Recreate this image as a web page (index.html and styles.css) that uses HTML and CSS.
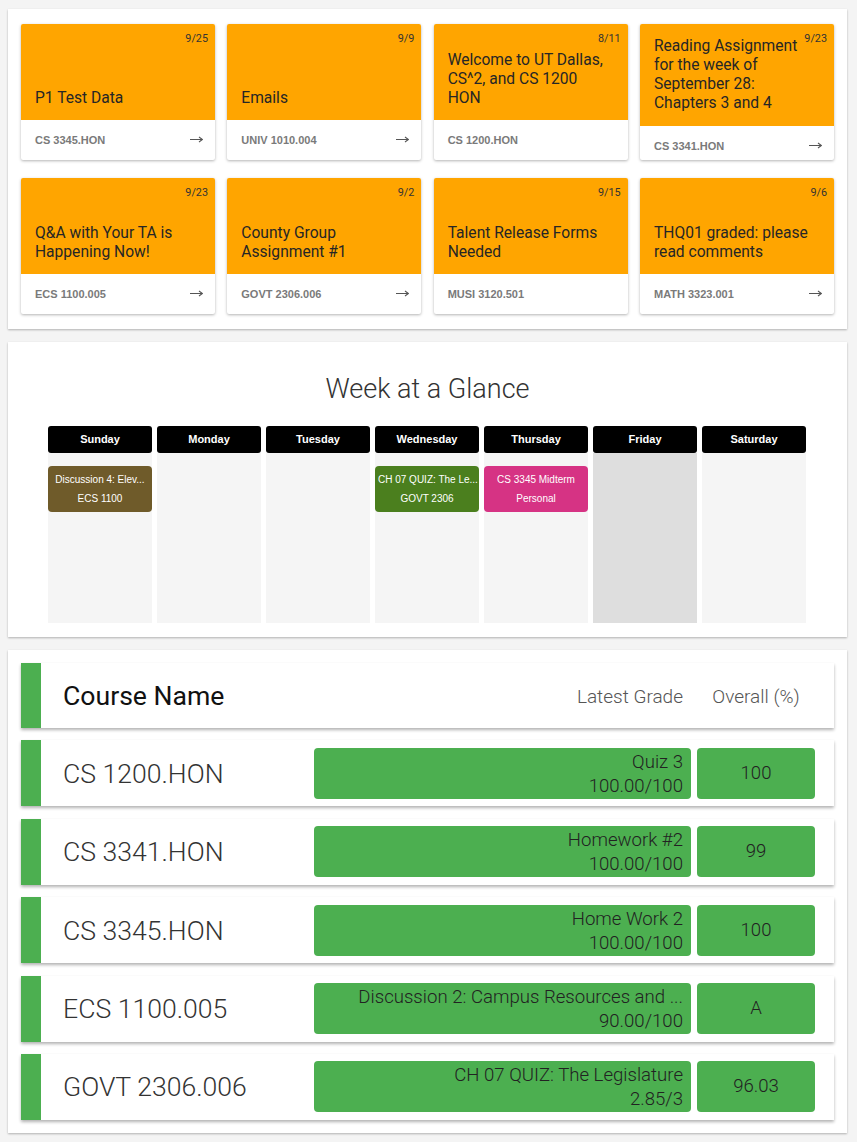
FILE: index.html
```html
<!DOCTYPE html>
<html lang="en">
<head>
<meta charset="utf-8">
<title>Dashboard</title>
<link rel="stylesheet" href="styles.css">
</head>
<body>
<section class="panel announcements">
  <div class="card"><div class="card-top"><span class="date">9/25</span><div class="title">P1 Test Data</div></div><div class="card-foot"><span>CS 3345.HON</span><svg class="arrow" width="13" height="7" viewBox="0 0 13 7"><path d="M0 3.5H12M9 1L12.5 3.5L9 6" fill="none" stroke="#555" stroke-width="1.1"/></svg></div></div>
  <div class="card"><div class="card-top"><span class="date">9/9</span><div class="title">Emails</div></div><div class="card-foot"><span>UNIV 1010.004</span><svg class="arrow" width="13" height="7" viewBox="0 0 13 7"><path d="M0 3.5H12M9 1L12.5 3.5L9 6" fill="none" stroke="#555" stroke-width="1.1"/></svg></div></div>
  <div class="card"><div class="card-top"><span class="date">8/11</span><div class="title">Welcome to UT Dallas, CS^2, and CS 1200 HON</div></div><div class="card-foot"><span>CS 1200.HON</span></div></div>
  <div class="card"><div class="card-top"><span class="date">9/23</span><div class="title">Reading Assignment for the week of September 28: Chapters 3 and 4</div></div><div class="card-foot"><span>CS 3341.HON</span><svg class="arrow" width="13" height="7" viewBox="0 0 13 7"><path d="M0 3.5H12M9 1L12.5 3.5L9 6" fill="none" stroke="#555" stroke-width="1.1"/></svg></div></div>
  <div class="card"><div class="card-top"><span class="date">9/23</span><div class="title">Q&amp;A with Your TA is Happening Now!</div></div><div class="card-foot"><span>ECS 1100.005</span><svg class="arrow" width="13" height="7" viewBox="0 0 13 7"><path d="M0 3.5H12M9 1L12.5 3.5L9 6" fill="none" stroke="#555" stroke-width="1.1"/></svg></div></div>
  <div class="card"><div class="card-top"><span class="date">9/2</span><div class="title">County Group Assignment #1</div></div><div class="card-foot"><span>GOVT 2306.006</span><svg class="arrow" width="13" height="7" viewBox="0 0 13 7"><path d="M0 3.5H12M9 1L12.5 3.5L9 6" fill="none" stroke="#555" stroke-width="1.1"/></svg></div></div>
  <div class="card"><div class="card-top"><span class="date">9/15</span><div class="title">Talent Release Forms Needed</div></div><div class="card-foot"><span>MUSI 3120.501</span></div></div>
  <div class="card"><div class="card-top"><span class="date">9/6</span><div class="title">THQ01 graded: please read comments</div></div><div class="card-foot"><span>MATH 3323.001</span><svg class="arrow" width="13" height="7" viewBox="0 0 13 7"><path d="M0 3.5H12M9 1L12.5 3.5L9 6" fill="none" stroke="#555" stroke-width="1.1"/></svg></div></div>
</section>

<section class="panel week">
  <h2 class="week-title">Week at a Glance</h2>
  <div class="days">
    <div class="day"><div class="day-head">Sunday</div><div class="day-body">
      <div class="event ev-brown"><div>Discussion 4: Elev...</div><div>ECS 1100</div></div>
    </div></div>
    <div class="day"><div class="day-head">Monday</div><div class="day-body"></div></div>
    <div class="day"><div class="day-head">Tuesday</div><div class="day-body"></div></div>
    <div class="day"><div class="day-head">Wednesday</div><div class="day-body">
      <div class="event ev-green"><div>CH 07 QUIZ: The Le...</div><div>GOVT 2306</div></div>
    </div></div>
    <div class="day"><div class="day-head">Thursday</div><div class="day-body">
      <div class="event ev-pink"><div>CS 3345 Midterm</div><div>Personal</div></div>
    </div></div>
    <div class="day today"><div class="day-head">Friday</div><div class="day-body"></div></div>
    <div class="day"><div class="day-head">Saturday</div><div class="day-body"></div></div>
  </div>
</section>

<section class="panel grades">
  <div class="grow head">
    <div class="bar"></div>
    <div class="cname">Course Name</div>
    <div class="hlatest">Latest Grade</div>
    <div class="hoverall">Overall (%)</div>
  </div>
  <div class="grow">
    <div class="bar"></div>
    <div class="cname">CS 1200.HON</div>
    <div class="latest"><div>Quiz 3</div><div>100.00/100</div></div>
    <div class="overall">100</div>
  </div>
  <div class="grow">
    <div class="bar"></div>
    <div class="cname">CS 3341.HON</div>
    <div class="latest"><div>Homework #2</div><div>100.00/100</div></div>
    <div class="overall">99</div>
  </div>
  <div class="grow">
    <div class="bar"></div>
    <div class="cname">CS 3345.HON</div>
    <div class="latest"><div>Home Work 2</div><div>100.00/100</div></div>
    <div class="overall">100</div>
  </div>
  <div class="grow">
    <div class="bar"></div>
    <div class="cname">ECS 1100.005</div>
    <div class="latest"><div>Discussion 2: Campus Resources and ...</div><div>90.00/100</div></div>
    <div class="overall">A</div>
  </div>
  <div class="grow">
    <div class="bar"></div>
    <div class="cname">GOVT 2306.006</div>
    <div class="latest"><div>CH 07 QUIZ: The Legislature</div><div>2.85/3</div></div>
    <div class="overall">96.03</div>
  </div>
</section>
</body>
</html>
```

FILE: styles.css
```css
* { box-sizing: border-box; }
html, body { margin: 0; }
body {
  background: #f4f4f4;
  padding: 9px 10px 9px 8px;
  font-family: Roboto, "Liberation Sans", Arial, sans-serif;
  color: #222;
}
.panel {
  background: #fff;
  box-shadow: 0 1px 2px rgba(0,0,0,0.28);
  margin-bottom: 13px;
}
.panel:last-child { margin-bottom: 0; }

/* Announcements */
.announcements {
  display: grid;
  grid-template-columns: repeat(4, 1fr);
  column-gap: 12.3px;
  row-gap: 18px;
  padding: 15px 13px;
}
.card {
  height: 136px;
  display: flex;
  flex-direction: column;
  background: #fff;
  box-shadow: 0 1px 3px rgba(0,0,0,0.3);
  border-radius: 2px;
  overflow: hidden;
}
.card-top {
  position: relative;
  flex: 0 0 auto;
  min-height: 96px;
  background: #ffa500;
  padding: 13px 14px 12.5px;
  display: flex;
  flex-direction: column;
  justify-content: flex-end;
}
.date {
  position: absolute;
  top: 8px;
  right: 7px;
  font-size: 10.8px;
  line-height: 13px;
  color: #333;
}
.title {
  font-weight: 400;
  font-size: 15.6px;
  line-height: 19px;
  color: #262626;
}
.card-foot {
  flex: 1 1 auto;
  display: flex;
  justify-content: space-between;
  align-items: flex-start;
  padding: 13px 12px 0 14px;
  font-family: "Liberation Sans", Arial, sans-serif;
  font-weight: bold;
  font-size: 11px;
  line-height: 14px;
  color: #7a7a7a;
}
.arrow { margin-top: 3px; }

/* Week */
.week { padding: 30px 0 14px; }
.week-title {
  margin: 0 0 20px;
  text-align: center;
  font-family: "Roboto Light", Roboto, sans-serif;
  font-weight: 300;
  font-size: 27px;
  line-height: 34px;
  color: #333;
}
.days {
  display: grid;
  grid-template-columns: repeat(7, 104px);
  column-gap: 5px;
  justify-content: center;
  font-family: "Liberation Sans", Arial, sans-serif;
  margin-left: -1px;
}
.day-head {
  height: 27px;
  background: #000;
  color: #fff;
  font-weight: bold;
  font-size: 11px;
  line-height: 27px;
  text-align: center;
  border-radius: 3px;
}
.day-body {
  height: 170px;
  background: #f5f5f5;
  padding-top: 13px;
}
.today .day-body { background: #dedede; }
.event {
  height: 46px;
  padding: 4px 3px;
  border-radius: 4px;
  color: #fff;
  font-size: 10px;
  line-height: 19px;
  text-align: center;
  white-space: nowrap;
  overflow: hidden;
}
.ev-brown { background: #6f5b2a; }
.ev-green { background: #4b7f1e; }
.ev-pink { background: #d63384; }

/* Grades */
.grades {
  padding: 13px 13px;
  display: flex;
  flex-direction: column;
  gap: 12.4px;
}
.grow {
  display: flex;
  align-items: center;
  height: 66px;
  background: #fff;
  box-shadow: 0 2px 3px rgba(0,0,0,0.3);
  padding-right: 19px;
}
.grow.head { height: 65px; }
.bar {
  align-self: stretch;
  width: 20px;
  background: #4caf50;
  flex: 0 0 20px;
}
.cname {
  flex: 0 0 273px;
  padding-left: 22px;
  font-family: "Roboto Light", Roboto, sans-serif;
  font-size: 26.6px;
  font-weight: 300;
  color: #333;
  white-space: nowrap;
}
.head .cname { font-family: Roboto, sans-serif; font-weight: 400; color: #111; }
.hlatest, .latest {
  flex: 0 0 377px;
  text-align: right;
  padding: 0 8px;
}
.hlatest, .hoverall {
  font-family: "Roboto Light", Roboto, sans-serif;
  font-size: 19px;
  font-weight: 300;
  color: #555;
  padding-top: 2px;
}
.hoverall, .overall {
  flex: 0 0 118px;
  margin-left: 6px;
  text-align: center;
}
.latest, .overall {
  background: #4caf50;
  border-radius: 4px;
  font-family: "Roboto Light", Roboto, sans-serif;
  font-size: 18.6px;
  font-weight: 300;
  color: #222;
  line-height: 24px;
}
.latest { padding: 2px 8px 1px; white-space: nowrap; overflow: hidden; }
.overall { height: 51px; line-height: 51px; }
```
